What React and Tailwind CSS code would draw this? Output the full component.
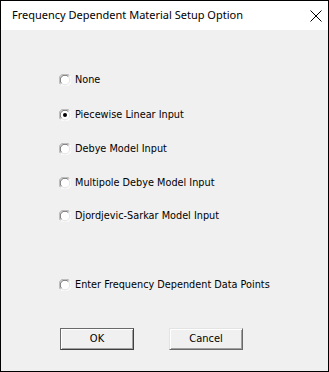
import React from "react";

function Radio({ checked }) {
  return (
    <svg width="12" height="12" viewBox="0 0 12 12" className="shrink-0">
      <circle cx="6" cy="6" r="5.5" fill="#ffffff" />
      <path d="M1.6 10.4 A5.5 5.5 0 0 1 10.4 1.6" stroke="#a0a0a0" strokeWidth="1" fill="none" />
      <path d="M10.4 1.6 A5.5 5.5 0 0 1 1.6 10.4" stroke="#ffffff" strokeWidth="1" fill="none" />
      <path d="M2.6 9.4 A4.5 4.5 0 0 1 9.4 2.6" stroke="#696969" strokeWidth="1" fill="none" />
      <path d="M9.4 2.6 A4.5 4.5 0 0 1 2.6 9.4" stroke="#e3e3e3" strokeWidth="1" fill="none" />
      {checked && <circle cx="6" cy="6" r="2" fill="#000000" />}
    </svg>
  );
}

function Option({ label, checked, className }) {
  return (
    <div className={"flex items-center h-[16px] " + (className || "")}>
      <Radio checked={checked} />
      <span className="ml-[4px] text-[10.8px] leading-none text-black">{label}</span>
    </div>
  );
}

export default function App() {
  return (
    <div
      className="w-[329px] h-[372px] border border-black bg-[#f0f0f0] flex flex-col overflow-hidden"
      style={{ fontFamily: "Tahoma, 'DejaVu Sans Condensed', 'Liberation Sans', sans-serif" }}
    >
      <div className="h-[29px] bg-white flex items-center justify-between pl-[11px] pr-[4px] shrink-0">
        <span
          className="text-[11px] text-black"
          style={{ fontFamily: "'Segoe UI', 'Noto Sans', sans-serif" }}
        >
          Frequency Dependent Material Setup Option
        </span>
        <svg width="12" height="12" viewBox="0 0 12 12" className="mr-[2px]">
          <path d="M0.5 0.5 L11.5 11.5 M11.5 0.5 L0.5 11.5" stroke="#000" strokeWidth="1" />
        </svg>
      </div>
      <div className="flex flex-col pl-[58px] pt-[42px]">
        <Option label="None" />
        <Option label="Piecewise Linear Input" checked className="mt-[19px]" />
        <Option label="Debye Model Input" className="mt-[18px]" />
        <Option label="Multipole Debye Model Input" className="mt-[18px]" />
        <Option label="Djordjevic-Sarkar Model Input" className="mt-[17px]" />
        <Option label="Enter Frequency Dependent Data Points" className="mt-[53px]" />
        <div className="flex mt-[35px] pl-[1px] gap-[35px]">
          <button className="w-[74px] h-[22px] border border-[#696969] border-b-[#404040] border-r-[#404040] bg-[#f0f0f0] text-[11px] text-black flex items-center justify-center shadow-[inset_1px_1px_0_#ffffff,inset_-1px_-1px_0_#a0a0a0]">
            OK
          </button>
          <button className="w-[74px] h-[22px] border border-[#e3e3e3] border-b-[#696969] border-r-[#696969] bg-[#f0f0f0] text-[11px] text-black flex items-center justify-center shadow-[inset_1px_1px_0_#ffffff,inset_-1px_-1px_0_#a0a0a0]">
            Cancel
          </button>
        </div>
      </div>
    </div>
  );
}
